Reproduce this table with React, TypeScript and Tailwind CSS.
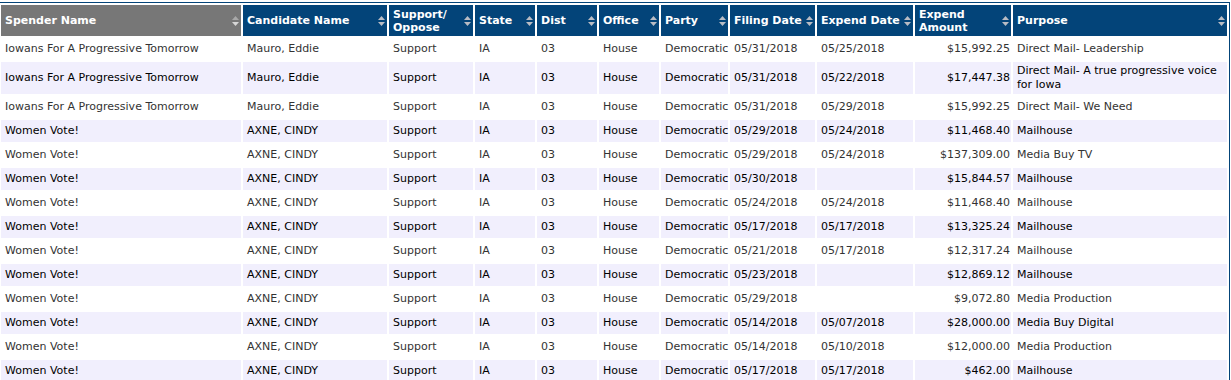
import React from "react";

type Row = {
  spender: string;
  candidate: string;
  filing: string;
  expend: string;
  amount: string;
  purpose: string;
};

const iowans = "Iowans For A Progressive Tomorrow";
const women = "Women Vote!";

const rows: Row[] = [
  { spender: iowans, candidate: "Mauro, Eddie", filing: "05/31/2018", expend: "05/25/2018", amount: "$15,992.25", purpose: "Direct Mail- Leadership" },
  { spender: iowans, candidate: "Mauro, Eddie", filing: "05/31/2018", expend: "05/22/2018", amount: "$17,447.38", purpose: "Direct Mail- A true progressive voice for Iowa" },
  { spender: iowans, candidate: "Mauro, Eddie", filing: "05/31/2018", expend: "05/29/2018", amount: "$15,992.25", purpose: "Direct Mail- We Need" },
  { spender: women, candidate: "AXNE, CINDY", filing: "05/29/2018", expend: "05/24/2018", amount: "$11,468.40", purpose: "Mailhouse" },
  { spender: women, candidate: "AXNE, CINDY", filing: "05/29/2018", expend: "05/24/2018", amount: "$137,309.00", purpose: "Media Buy TV" },
  { spender: women, candidate: "AXNE, CINDY", filing: "05/30/2018", expend: "", amount: "$15,844.57", purpose: "Mailhouse" },
  { spender: women, candidate: "AXNE, CINDY", filing: "05/24/2018", expend: "05/24/2018", amount: "$11,468.40", purpose: "Mailhouse" },
  { spender: women, candidate: "AXNE, CINDY", filing: "05/17/2018", expend: "05/17/2018", amount: "$13,325.24", purpose: "Mailhouse" },
  { spender: women, candidate: "AXNE, CINDY", filing: "05/21/2018", expend: "05/17/2018", amount: "$12,317.24", purpose: "Mailhouse" },
  { spender: women, candidate: "AXNE, CINDY", filing: "05/23/2018", expend: "", amount: "$12,869.12", purpose: "Mailhouse" },
  { spender: women, candidate: "AXNE, CINDY", filing: "05/29/2018", expend: "", amount: "$9,072.80", purpose: "Media Production" },
  { spender: women, candidate: "AXNE, CINDY", filing: "05/14/2018", expend: "05/07/2018", amount: "$28,000.00", purpose: "Media Buy Digital" },
  { spender: women, candidate: "AXNE, CINDY", filing: "05/14/2018", expend: "05/10/2018", amount: "$12,000.00", purpose: "Media Production" },
  { spender: women, candidate: "AXNE, CINDY", filing: "05/17/2018", expend: "05/17/2018", amount: "$462.00", purpose: "Mailhouse" },
];

const GRID =
  "grid grid-cols-[240px_144px_84px_60px_60px_60px_67px_85px_96px_96px_214px] gap-[2px]";

function SortIcon({ sorted }: { sorted?: boolean }) {
  return (
    <svg width="7" height="10" viewBox="0 0 7 10" className="shrink-0">
      <polygon points="3.5,0 7,4 0,4" fill={sorted ? "#a8a8a8" : "#b9bcc4"} />
      <polygon points="0,6 7,6 3.5,10" fill={sorted ? "#d6d6d6" : "#b9bcc4"} />
    </svg>
  );
}

function Head({ label, sorted }: { label: React.ReactNode; sorted?: boolean }) {
  return (
    <div
      className={`flex items-center justify-between h-[31px] pl-[4px] pr-[2px] text-white font-bold text-[11px] leading-[13px] ${
        sorted ? "bg-[#777777]" : "bg-[#034479]"
      }`}
    >
      <span className="whitespace-nowrap">{label}</span>
      <SortIcon sorted={sorted} />
    </div>
  );
}

function Cell({
  children,
  right,
  wrap,
}: {
  children: React.ReactNode;
  right?: boolean;
  wrap?: boolean;
}) {
  return (
    <div
      className={`flex items-center min-h-[22px] py-[2px] ${
        right ? "justify-end pr-[1px] pl-[3px]" : "pl-[4px] pr-[2px]"
      } ${wrap ? "" : "whitespace-nowrap"}`}
    >
      {children}
    </div>
  );
}

export default function App() {
  return (
    <div
      className="bg-white min-h-[380px]"
      style={{ fontFamily: '"DejaVu Sans", Verdana, sans-serif' }}
    >
      <div className="mt-[2px] ml-[-2px] w-[1232px] border border-[#034479] p-[2px] flex flex-col gap-[2px]">
        <div className={GRID}>
          <Head label="Spender Name" sorted />
          <Head label="Candidate Name" />
          <Head
            label={
              <>
                Support/
                <br />
                Oppose
              </>
            }
          />
          <Head label="State" />
          <Head label="Dist" />
          <Head label="Office" />
          <Head label="Party" />
          <Head label="Filing Date" />
          <Head label="Expend Date" />
          <Head
            label={
              <>
                Expend
                <br />
                Amount
              </>
            }
          />
          <Head label="Purpose" />
        </div>
        {rows.map((r, i) => {
          const alt = i % 2 === 1;
          return (
            <div
              key={i}
              className={`${GRID} text-[11px] leading-[14px] ${
                alt ? "text-black [&>div]:bg-[#f1effd]" : "text-[#333333] [&>div]:bg-white"
              }`}
            >
              <Cell>{r.spender}</Cell>
              <Cell>{r.candidate}</Cell>
              <Cell>Support</Cell>
              <Cell>IA</Cell>
              <Cell>03</Cell>
              <Cell>House</Cell>
              <Cell>Democratic</Cell>
              <Cell>{r.filing}</Cell>
              <Cell>{r.expend}</Cell>
              <Cell right>{r.amount}</Cell>
              <Cell wrap>{r.purpose}</Cell>
            </div>
          );
        })}
      </div>
    </div>
  );
}
